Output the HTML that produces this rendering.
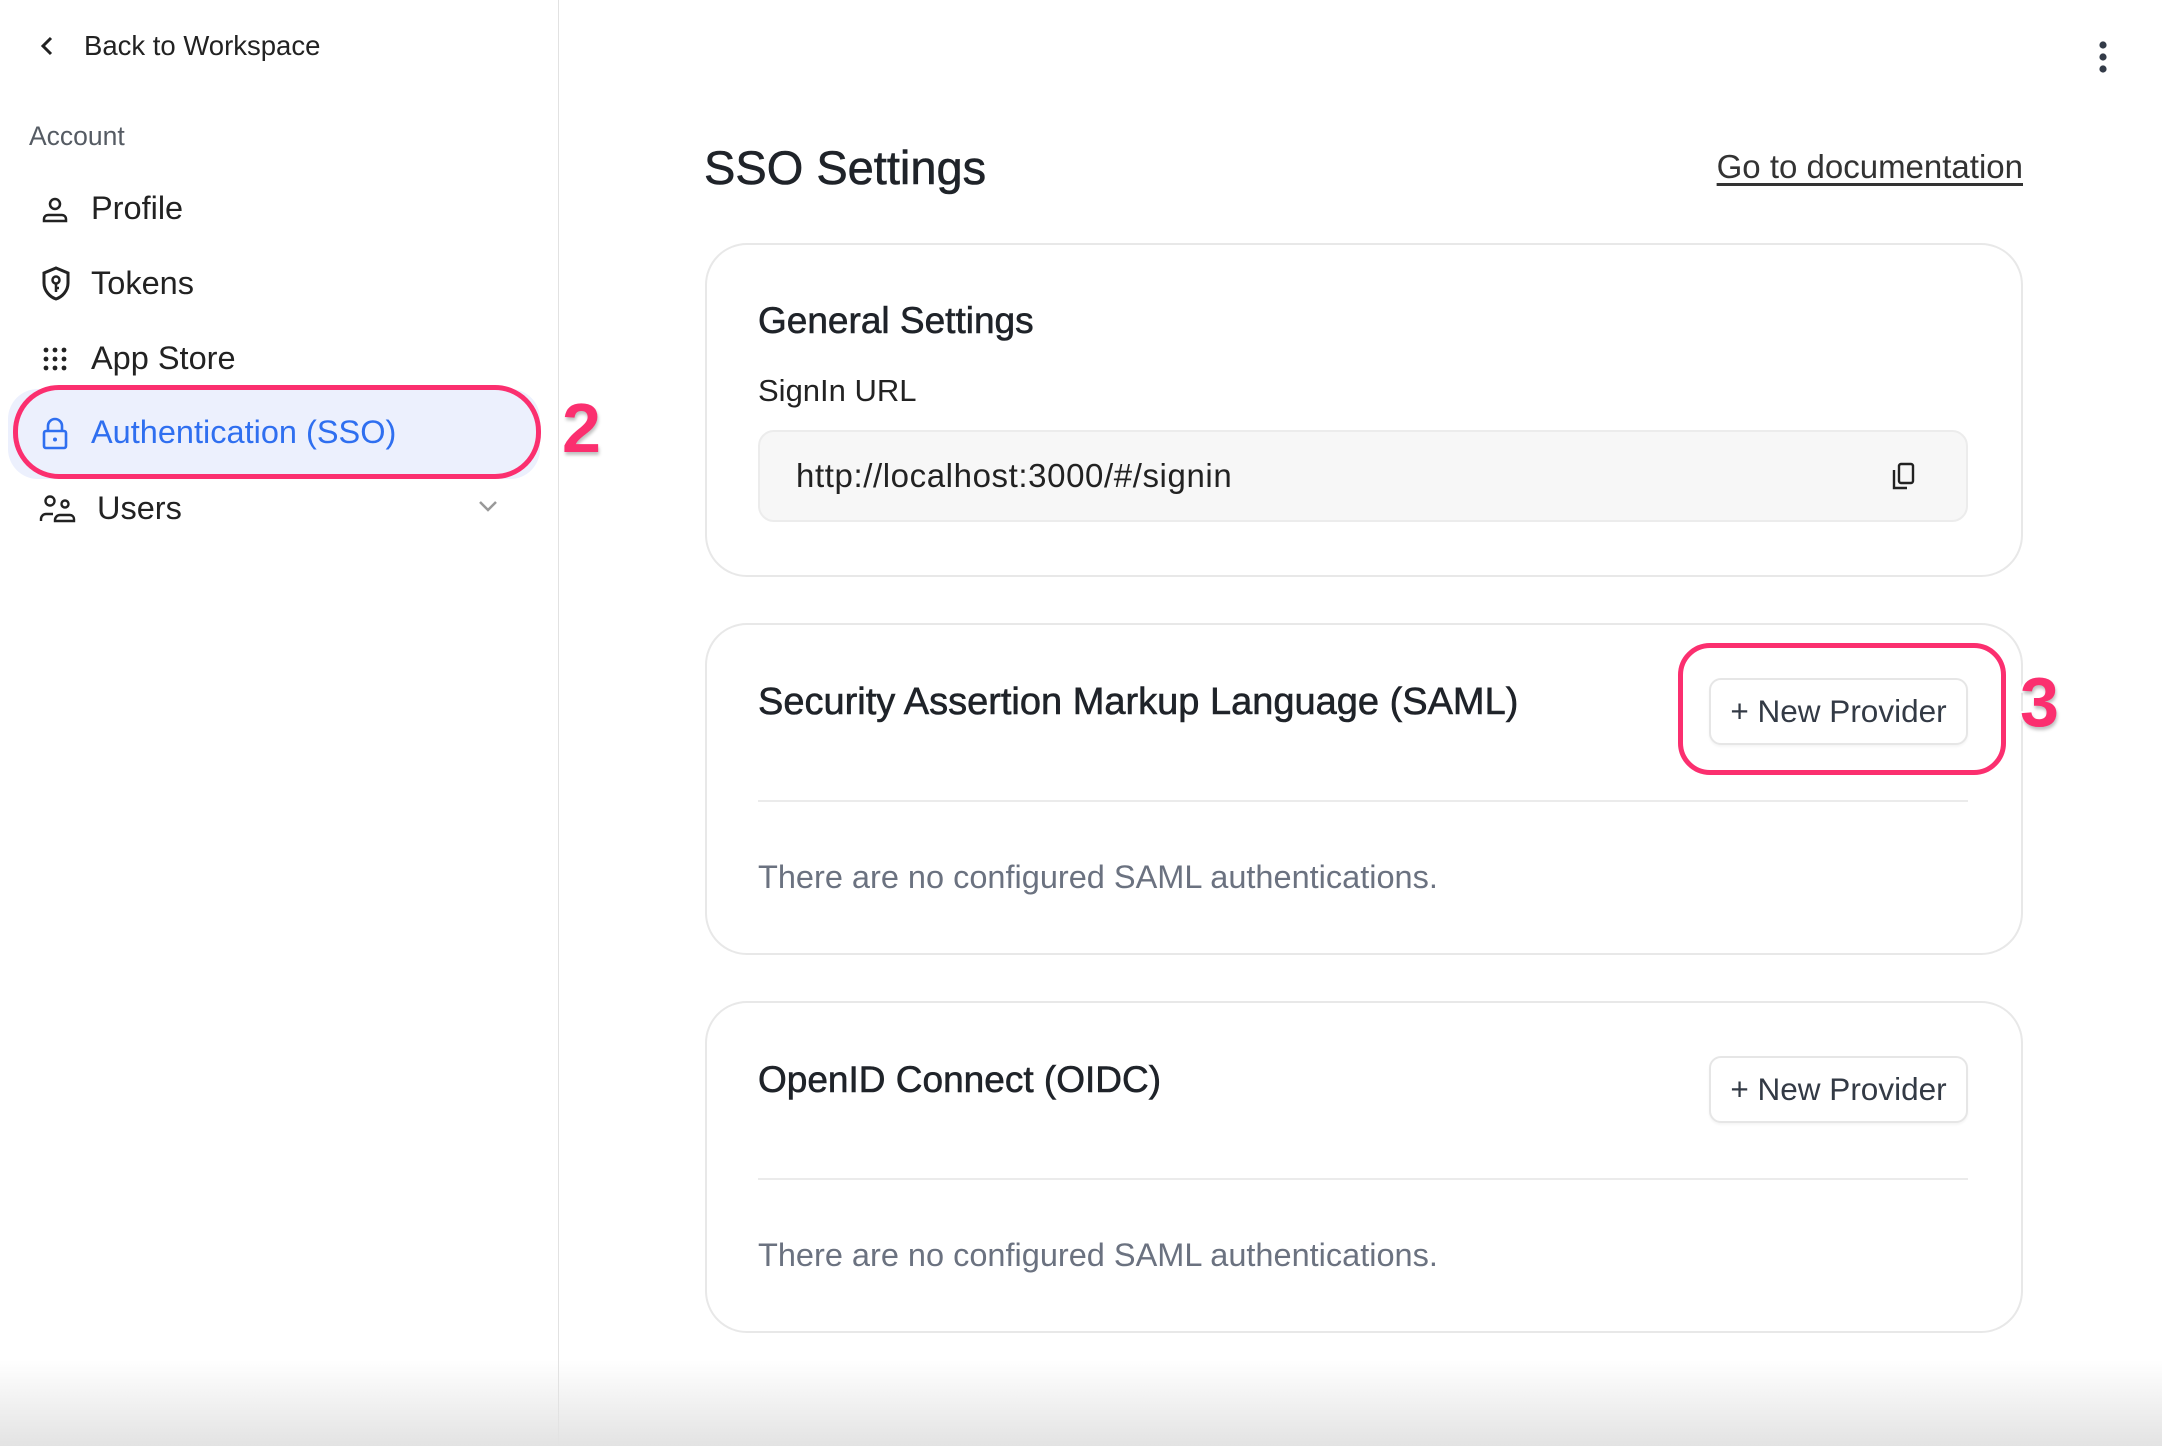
<!DOCTYPE html>
<html><head><meta charset="utf-8"><style>
*{margin:0;padding:0;box-sizing:border-box}
body{width:2162px;height:1446px;position:relative;overflow:hidden;background:#fff;font-family:"Liberation Sans",sans-serif;color:#1f2329}
.a{position:absolute;white-space:nowrap}
.m{-webkit-text-stroke:0.6px currentColor}
.card{position:absolute;left:705px;width:1318px;border:2px solid #e8e8e8;border-radius:42px;background:#fff}
.btn{position:absolute;left:1709px;width:259px;height:67px;border:2px solid #e6e6e6;border-radius:12px;background:#fff;font-size:31.5px;color:#333a45;text-align:center;line-height:63px;box-shadow:0 2px 2px rgba(0,0,0,.04)}
.hr{position:absolute;left:758px;width:1210px;height:2px;background:#ebebeb}
.empty{font-size:32.5px;color:#6b7280}
svg{position:absolute}
.num{font-size:70px;font-weight:bold;color:#fb2f6f;-webkit-text-stroke:4px #fff;paint-order:stroke fill;text-shadow:1px 3px 3px rgba(0,0,0,.25)}
</style></head><body>
<div class="a" style="left:558px;top:0;width:1px;height:1446px;background:#e2e2e2"></div>

<svg style="left:38px;top:35px" width="20" height="22" viewBox="0 0 20 22"><path d="M13 3 L5 11 L13 19" fill="none" stroke="#222" stroke-width="3"/></svg>
<div class="a" style="left:84px;top:30px;font-size:27.5px;color:#222">Back to Workspace</div>
<div class="a" style="left:29px;top:121px;font-size:26.5px;color:#555b63">Account</div>

<svg style="left:40px;top:195px" width="30" height="30" viewBox="0 0 30 30"><circle cx="15" cy="9" r="5" fill="none" stroke="#222" stroke-width="2.5"/><path d="M4 26 v-2 a4 4 0 0 1 4-4 h14 a4 4 0 0 1 4 4 v2 z" fill="none" stroke="#222" stroke-width="2.5"/></svg>
<div class="a" style="left:91px;top:190px;font-size:32.5px;color:#222">Profile</div>

<svg style="left:40px;top:266px" width="32" height="36" viewBox="0 0 32 36"><path d="M16 2 L28 7 V17 C28 25 22 31 16 33 C10 31 4 25 4 17 V7 Z" fill="none" stroke="#222" stroke-width="3"/><circle cx="16" cy="14" r="3.5" fill="none" stroke="#222" stroke-width="2.5"/><path d="M16 17 V26 M16 22 h3" stroke="#222" stroke-width="2.5"/></svg>
<div class="a" style="left:91px;top:265px;font-size:32.5px;color:#222">Tokens</div>

<svg style="left:42px;top:346px" width="26" height="26" viewBox="0 0 26 26"><g fill="#222"><circle cx="4" cy="4" r="2.4"/><circle cx="13" cy="4" r="2.4"/><circle cx="22" cy="4" r="2.4"/><circle cx="4" cy="13" r="2.4"/><circle cx="13" cy="13" r="2.4"/><circle cx="22" cy="13" r="2.4"/><circle cx="4" cy="22" r="2.4"/><circle cx="13" cy="22" r="2.4"/><circle cx="22" cy="22" r="2.4"/></g></svg>
<div class="a" style="left:91px;top:340px;font-size:32.5px;color:#222">App Store</div>

<div class="a" style="left:8px;top:389px;width:532px;height:90px;background:#ecf0fd;border-radius:30px"></div>
<div class="a" style="left:13px;top:385px;width:528px;height:94px;border:5px solid #fb2f6f;border-radius:46px"></div>
<svg style="left:42px;top:417px" width="26" height="34" viewBox="0 0 26 34"><path d="M6 14 V9 a7 7 0 0 1 14 0 V14" fill="none" stroke="#2f6ff0" stroke-width="2.6"/><rect x="2" y="14" width="22" height="17" rx="2" fill="none" stroke="#2f6ff0" stroke-width="2.6"/><circle cx="13" cy="22.5" r="2" fill="#2f6ff0"/></svg>
<div class="a" style="left:91px;top:414px;font-size:32.5px;color:#2f6ff0">Authentication (SSO)</div>
<div class="a num" style="left:562px;top:388px">2</div>

<svg style="left:38px;top:494px" width="38" height="30" viewBox="0 0 38 30"><circle cx="12" cy="7" r="4.5" fill="none" stroke="#222" stroke-width="2.4"/><circle cx="27" cy="10" r="3.5" fill="none" stroke="#222" stroke-width="2.4"/><path d="M3 27 v-2 a5 5 0 0 1 5-5 h7" fill="none" stroke="#222" stroke-width="2.4"/><path d="M17 27 v-1 a5 5 0 0 1 5-5 h10 a4 4 0 0 1 4 4 v2 z" fill="none" stroke="#222" stroke-width="2.4"/></svg>
<div class="a" style="left:97px;top:490px;font-size:32.5px;color:#222">Users</div>
<svg style="left:477px;top:498px" width="22" height="16" viewBox="0 0 22 16"><path d="M3 4 L11 12 L19 4" fill="none" stroke="#999" stroke-width="2.5"/></svg>

<svg style="left:2095px;top:40px" width="16" height="36" viewBox="0 0 16 36"><g fill="#333b48"><circle cx="8" cy="5" r="3.6"/><circle cx="8" cy="17" r="3.6"/><circle cx="8" cy="29" r="3.6"/></g></svg>

<div class="a m" style="left:704px;top:140px;font-size:47px;color:#1f2329">SSO Settings</div>
<div class="a" style="right:139px;top:148px;font-size:33px;color:#333;text-decoration:underline;text-underline-offset:5px">Go to documentation</div>

<div class="card" style="top:243px;height:334px"></div>
<div class="a m" style="left:758px;top:300px;font-size:37px">General Settings</div>
<div class="a" style="left:758px;top:373px;font-size:31px;color:#222">SignIn URL</div>
<div class="a" style="left:758px;top:430px;width:1210px;height:92px;background:#f7f7f7;border:2px solid #ececec;border-radius:16px"></div>
<div class="a" style="left:796px;top:457px;font-size:33px;letter-spacing:0.6px;color:#222">http://localhost:3000/#/signin</div>
<svg style="left:1890px;top:462px" width="28" height="30" viewBox="0 0 28 30"><rect x="9" y="2" width="14" height="19" rx="2" fill="none" stroke="#222" stroke-width="2.4"/><path d="M4 8 V26 H17" fill="none" stroke="#222" stroke-width="2.4"/></svg>

<div class="card" style="top:623px;height:332px"></div>
<div class="a m" style="left:758px;top:681px;font-size:38px">Security Assertion Markup Language (SAML)</div>
<div class="btn" style="top:678px">+ New Provider</div>
<div class="a" style="left:1678px;top:643px;width:328px;height:132px;border:5px solid #fb2f6f;border-radius:32px"></div>
<div class="a num" style="left:2020px;top:662px">3</div>
<div class="hr" style="top:800px"></div>
<div class="a empty" style="left:758px;top:859px">There are no configured SAML authentications.</div>

<div class="card" style="top:1001px;height:332px"></div>
<div class="a m" style="left:758px;top:1059px;font-size:37px">OpenID Connect (OIDC)</div>
<div class="btn" style="top:1056px">+ New Provider</div>
<div class="hr" style="top:1178px"></div>
<div class="a empty" style="left:758px;top:1237px">There are no configured SAML authentications.</div>

<div class="a" style="left:0;top:1360px;width:2162px;height:86px;background:linear-gradient(#fff0,#e3e3e3)"></div>
</body></html>
